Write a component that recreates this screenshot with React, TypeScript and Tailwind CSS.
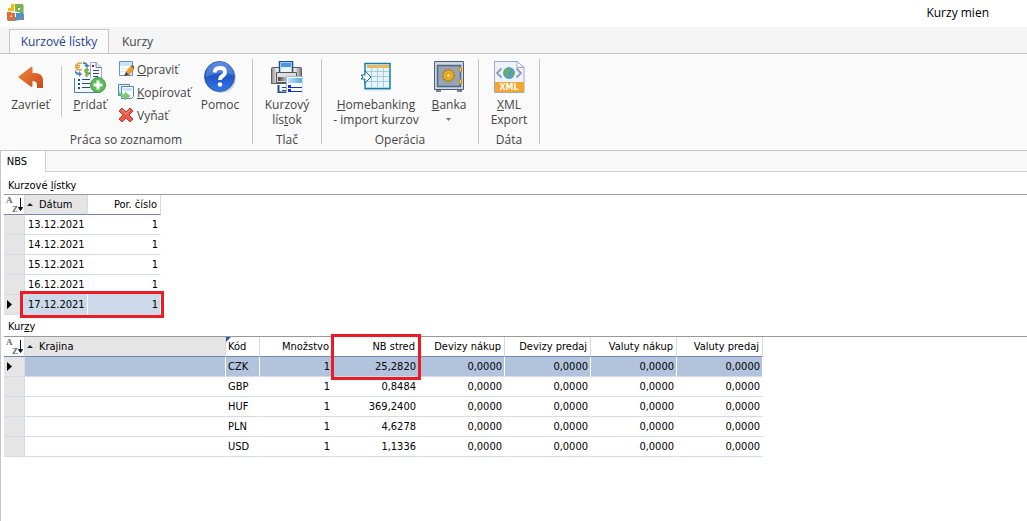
import React from "react";

interface Rate {
  code: string;
  amount: number;
  mid: string;
  rest: string[];
}

const lists = [
  "13.12.2021",
  "14.12.2021",
  "15.12.2021",
  "16.12.2021",
  "17.12.2021",
];

const zeros = ["0,0000", "0,0000", "0,0000", "0,0000"];

const rates: Rate[] = [
  { code: "CZK", amount: 1, mid: "25,2820", rest: zeros },
  { code: "GBP", amount: 1, mid: "0,8484", rest: zeros },
  { code: "HUF", amount: 1, mid: "369,2400", rest: zeros },
  { code: "PLN", amount: 1, mid: "4,6278", rest: zeros },
  { code: "USD", amount: 1, mid: "1,1336", rest: zeros },
];

const rateColumns = ["Devizy nákup", "Devizy predaj", "Valuty nákup", "Valuty predaj"];

const Logo = () => (
  <svg width="17" height="17" viewBox="0 0 17 17">
    <g fill="none" stroke="#85898c" strokeWidth="3">
      <path d="M9.500 7.500V2.500H15V11H10M2 17V10H7V15.500H1M10 16.500V14.500H15.500V10" />
    </g>
    <g fill="none" strokeWidth="3">
      <path d="M1 5.500H5.500V0M4 1.500H7.500" stroke="#f8bd0a" />
      <path d="M9.500 7V1.500H14.500V7.500H10" stroke="#7ab648" />
      <path d="M7 9.500H1.500V14.500H6.500V11" stroke="#e66a2e" />
      <path d="M9 10H14.500V13H9.500V16" stroke="#4595cc" />
    </g>
    <path d="M7 4h1v4H4v1h4v4h1V9h4V8H8z" fill="#fff" />
  </svg>
);

const BackIcon = () => (
  <svg width="32" height="32" viewBox="0 0 32 32">
    <defs>
      <linearGradient id="back" x1="0" y1="0" x2="1" y2="1">
        <stop offset="0" stopColor="#f4863b" />
        <stop offset="1" stopColor="#c54a1a" />
      </linearGradient>
    </defs>
    <path
      d="M3 16L16 6q2-1 1.500 1.500V12H20q8 0 8 8v7h-6v-3q0-4-4.500-4v4.500q0 2-2 1z"
      fill="url(#back)"
    />
  </svg>
);

const AddIcon = () => (
  <svg width="32" height="32" viewBox="0 0 32 32">
    <path d="M16.500 1.500H22l5.500 5v12h-11z" fill="#fbfcff" stroke="#9fabd0" />
    <path d="M22 1.500v5h5.500" fill="#dfe5f3" stroke="#6f80b4" />
    <path d="M1 17h26v14H1z" fill="#f3f8fd" />
    <path d="M.5 17v14.500H26" fill="none" stroke="#4b80bd" />
    <g fill="#2b4a80">
      <path d="M4 18h2v2H4zM8 18h8v1H8zM4 22h2v2H4zM8 22h8v1H8zM4 26h2v2H4zM8 26h8v1H8z" />
      <path d="M19 9h6v1h-6zM19 12h6v1h-6zM19 15h5v1h-5z" />
    </g>
    <path d="M18 4h2v2h-2z" fill="#d0021b" />
    <path
      d="M8 2.500Q3 .500 2.500 5.500T8 8.500M1 4.500h5M1 6.500h5"
      fill="none"
      stroke="#e0a33c"
      strokeWidth="1.600"
    />
    <path
      d="M15 9q-4-1.500-4 1t4 2-4 2.500M13 7v9"
      fill="none"
      stroke="#70a84a"
      strokeWidth="1.600"
    />
    <path d="M9 1q4 0 5 3h2l-3 3-3-3h2q-1-1-3-1zM1 9v3q1 2 4 2v2l3-3-3-3v2q-2 0-4-3z" fill="#4b86b8" />
    <circle cx="24" cy="24" r="7.500" fill="#5dba58" stroke="#3f9c3c" />
    <path d="M24 19.500v9M19.500 24h9" stroke="#fff" strokeWidth="3" />
  </svg>
);

const EditIcon = () => (
  <svg width="16" height="16" viewBox="0 0 16 16">
    <path d="M1.500.500h13v14h-13z" fill="#fff" stroke="#5f95cf" />
    <path d="M2 1h12v4H2z" fill="#c9e3f7" />
    <path d="M3 7h7v1H3zM3 10h5v1H3z" fill="#dbe5ee" />
    <path d="M8 11l5-6 3 3-5 6z" fill="#eaa42e" stroke="#c08428" strokeWidth=".7" />
    <path d="M13 5l1-1 2 1v3z" fill="#9a4f32" />
    <path d="M8 11l3 3-5 1z" fill="#4d4033" />
  </svg>
);

const CopyIcon = () => (
  <svg width="16" height="16" viewBox="0 0 16 16">
    <path d="M.5.500h11v11H.5z" fill="#e4f3fd" stroke="#4c87c5" />
    <path d="M3.500 2.500h12v10l-2 2h-10z" fill="#fff" stroke="#4c87c5" />
    <path d="M5 4h9v3H5z" fill="#c9e3f7" />
    <path d="M1 8q2 3 6 2.500V8l5 4-5 4v-2.500Q1 13 1 8z" fill="#7acb74" stroke="#58b155" strokeWidth=".5" />
  </svg>
);

const DeleteIcon = () => (
  <svg width="16" height="16" viewBox="0 0 16 16">
    <path
      d="M4 1l4 4 4-4 3 3-4 4 4 4-3 3-4-4-4 4-3-3 4-4-4-4z"
      fill="#ee5b4c"
      stroke="#c23a30"
      strokeLinejoin="round"
    />
    <path d="M4 3l4 4 4-4" fill="none" stroke="#f79a8d" />
  </svg>
);

const HelpIcon = () => (
  <svg width="32" height="32" viewBox="0 0 32 32">
    <defs>
      <linearGradient id="help" x1="0" y1="0" x2="0" y2="1">
        <stop offset="0" stopColor="#4b7fdd" />
        <stop offset=".5" stopColor="#2256c4" />
        <stop offset="1" stopColor="#3577e8" />
      </linearGradient>
    </defs>
    <circle cx="17" cy="17" r="15" fill="#c9ccd2" />
    <circle cx="15.500" cy="15.500" r="15" fill="url(#help)" stroke="#1d4ba8" strokeWidth=".8" />
    <path d="M2 14a14 13 0 0 1 28 0q-14-5-28 2z" fill="#7ea6ec" opacity=".4" />
    <path
      d="M10.500 11.500q.500-4.500 5.500-4.500t5 4q0 2.500-2.500 4t-2.500 4"
      fill="none"
      stroke="#fff"
      strokeWidth="3.800"
    />
    <circle cx="16" cy="23.500" r="2.300" fill="#fff" />
  </svg>
);

const PrintIcon = () => (
  <svg width="32" height="32" viewBox="0 0 32 32">
    <defs>
      <linearGradient id="print" x1="0" y1="0" x2="1" y2="0">
        <stop offset="0" stopColor="#8a8a8a" />
        <stop offset=".2" stopColor="#f4f4f4" />
        <stop offset=".8" stopColor="#e2e2e2" />
        <stop offset="1" stopColor="#777" />
      </linearGradient>
      <linearGradient id="tray" x1="0" y1="0" x2="1" y2="0">
        <stop offset="0" stopColor="#444" />
        <stop offset="1" stopColor="#e8e8e8" />
      </linearGradient>
      <linearGradient id="sheet" x1="0" y1="0" x2="1" y2="0">
        <stop offset="0" stopColor="#bfe1f5" />
        <stop offset="1" stopColor="#5aa9dd" />
      </linearGradient>
    </defs>
    <path d="M.5 7.500q0-1 1-1h28q1 0 1 1v15H.5z" fill="url(#print)" stroke="#5c5c5c" />
    <path d="M8.500.500h13v12h-13z" fill="#e6f4fd" stroke="#17509c" strokeWidth="1.500" />
    <path d="M10 2h10v4H10z" fill="#4a97e0" />
    <path d="M5.500 11.500h20v10h-20z" fill="#dedede" stroke="#555" />
    <path d="M7 16h11v4H7z" fill="url(#tray)" />
    <path d="M7.500 24v7.500h8" fill="#fff" stroke="#17509c" strokeWidth="2" />
    <path d="M11 26h4v1h-4zM11 29h4v1h-4z" fill="#17509c" />
    <path d="M15.500 15.500H32v17H15.500z" fill="#fff" stroke="#8fc0ea" />
    <path d="M17 17h14v5H17z" fill="url(#sheet)" />
    <path d="M17 24h3v3h-3zM17 28h3v3h-3zM20 26h11v1H20zM20 30h11v1H20z" fill="#1330d4" />
  </svg>
);

const ImportIcon = () => (
  <svg width="32" height="32" viewBox="0 0 32 32">
    <path d="M5 28h26v1.500H5z" fill="#d5d9dc" />
    <path d="M5 2.500h25v25H5z" fill="#e8f5fc" stroke="#0d7fb8" strokeWidth="1.500" />
    <path d="M7 4h22v3H7z" fill="#f6b73c" />
    <path d="M11.500 4v22M17.500 4v22M23.500 4v22M6 10.500h23M6 15.500h23M6 20.500h23" stroke="#a5c9e4" />
    <path d="M1 14h4v-4l6 6-6 6v-4H1l2-2z" fill="#fff" stroke="#0d6fa8" />
  </svg>
);

const SafeIcon = () => (
  <svg width="32" height="32" viewBox="0 0 32 32">
    <path d="M3 28h5v3H3zM24 28h5v3h-5z" fill="#77859a" />
    <path d="M1.500.500h29v28h-29z" fill="#ccd7e3" stroke="#4c5e75" />
    <path d="M4.500 4.500h23v21h-23z" fill="#93a5b9" stroke="#56667b" strokeWidth="1.500" />
    <circle cx="15.500" cy="14.500" r="5.500" fill="#eab530" stroke="#c48a1c" strokeWidth="1.500" />
    <circle cx="15.500" cy="14.500" r="6.500" fill="none" stroke="#b77a12" strokeDasharray="1 2" />
    <circle cx="15.500" cy="14.500" r="2.500" fill="#f9d864" stroke="#c48a1c" />
    <path d="M26.500 6.500h2v4h-2zM26.500 18.500h2v4h-2z" fill="#ffcf3a" stroke="#d08a10" />
  </svg>
);

const XmlIcon = () => (
  <svg width="32" height="32" viewBox="0 0 32 32">
    <path d="M1.500.500H24l7 6v25H1.500z" fill="#eef2fa" stroke="#9ca8c4" />
    <path d="M24 .5v6h7z" fill="#fff" stroke="#9ca8c4" />
    <path d="M2 21h29v10H2z" fill="#f7a52b" />
    <circle cx="16" cy="12" r="5.500" fill="#4c9bd8" stroke="#3a7ab8" strokeWidth=".6" />
    <path d="M12 9l4-2 2 3-3 1 1 3-2 2q-3-2-2-7zM18 13l3-3q1 4-3 6z" fill="#6bb545" />
    <path
      d="M8.500 7.500L4 12l4.500 4.500M23.500 7.500L28 12l-4.500 4.500"
      fill="none"
      stroke="#8f9bb8"
      strokeWidth="1.800"
    />
    <text x="16" y="29" textAnchor="middle" fontSize="8" fontWeight="700" fill="#fff" fontFamily="DejaVu Sans">
      XML
    </text>
  </svg>
);

const SortIcon = () => (
  <svg width="17" height="17" viewBox="0 0 17 17">
    <text x="0" y="7" fontSize="9" fontWeight="700" fill="#666" fontFamily="Liberation Serif">A</text>
    <text x="6" y="16" fontSize="9" fontWeight="700" fill="#666" fontFamily="Liberation Serif">Z</text>
    <path d="M14.500 2v11M12.500 11.500l2 3 2-3z" fill="#111" stroke="#111" />
  </svg>
);

const SortMark = () => (
  <svg className="shrink-0" width="6" height="3" viewBox="0 0 6 3">
    <path d="M0 3l3-3 3 3z" fill="#222" />
  </svg>
);

const RowMark = () => (
  <svg className="ml-[3px]" width="5" height="9" viewBox="0 0 5 9">
    <path d="M0 0l5 4.500L0 9z" fill="#000" />
  </svg>
);

interface BigButtonProps {
  icon: React.ReactNode;
  className?: string;
  children: React.ReactNode;
}

const BigButton: React.FC<BigButtonProps> = ({ icon, className, children }) => (
  <button type="button" className={`flex flex-col items-center whitespace-nowrap ${className ?? ""}`}>
    {icon}
    <span className="mt-1 text-center">{children}</span>
  </button>
);

const SmallButton: React.FC<BigButtonProps> = ({ icon, children }) => (
  <button type="button" className="flex items-center gap-[3px] h-4 whitespace-nowrap">
    {icon}
    <span>{children}</span>
  </button>
);

const Group: React.FC<{ label: string; className: string; children: React.ReactNode }> = ({
  label,
  className,
  children,
}) => (
  <>
    <div className={`flex flex-col shrink-0 h-[88px] pt-[2px] ${className}`}>
      <div className="flex flex-1 justify-center">{children}</div>
      <div className="text-center">{label}</div>
    </div>
    <div className="w-px h-[85px] shrink-0 bg-[#c6c6c6]" />
  </>
);

const Ribbon = () => (
  <div className="bg-[#f5f5f5] text-[#444] text-[12px] leading-[15px] font-['Open_Sans','Noto_Sans',sans-serif]">
    <div className="flex pt-[2px] border-b border-[#c6c6c6]">
      <button
        type="button"
        className="ml-[9px] -mb-px w-[100px] h-6 border border-b-0 border-[#c6c6c6] bg-[#fafafa] text-[#1e3f94]"
      >
        Kurzové lístky
      </button>
      <button type="button" className="w-[57px] h-6">
        Kurzy
      </button>
    </div>
    <div className="flex items-start bg-[#fafafa] pt-[5px] pb-[3px] border-b border-[#c6c6c6]">
      <Group label="Práca so zoznamom" className="w-[252px]">
        <BigButton icon={<BackIcon />} className="w-[61px]">
          Zavrieť
        </BigButton>
        <div className="w-px h-[51px] mt-[5px] bg-[#c6c6c6]" />
        <BigButton icon={<AddIcon />} className="w-[56px]">
          <u>P</u>ridať
        </BigButton>
        <div className="flex flex-col gap-[7px] w-[77px]">
          <SmallButton icon={<EditIcon />}>
            <u>O</u>praviť
          </SmallButton>
          <SmallButton icon={<CopyIcon />}>
            <u>K</u>opírovať
          </SmallButton>
          <SmallButton icon={<DeleteIcon />}>Vyňať</SmallButton>
        </div>
        <BigButton icon={<HelpIcon />} className="w-[50px] mr-[7px]">
          Pomoc
        </BigButton>
      </Group>
      <Group label="Tlač" className="w-[68px]">
        <BigButton icon={<PrintIcon />}>
          Kurzový
          <br />
          lís<u>t</u>ok
        </BigButton>
      </Group>
      <Group label="Operácia" className="w-[156px]">
        <BigButton icon={<ImportIcon />} className="w-[108px]">
          <u>H</u>omebanking
          <br />- import kurzov
        </BigButton>
        <BigButton icon={<SafeIcon />} className="w-[38px] mr-[10px]">
          <u>B</u>anka
          <svg className="mx-auto mt-[6px]" width="5" height="3" viewBox="0 0 5 3">
            <path d="M0 0h5L2.500 3z" fill="#777" />
          </svg>
        </BigButton>
      </Group>
      <Group label="Dáta" className="w-[60px]">
        <BigButton icon={<XmlIcon />}>
          <u>X</u>ML
          <br />
          Export
        </BigButton>
      </Group>
    </div>
  </div>
);

const headCell = "h-5 p-0 font-normal border-b border-b-[#7286b5] border-r border-r-[#d6d9e8]";
const cell = "h-5 p-0 border-b border-b-[#d6d9e8] border-r";

const ListTable = () => (
  <div className="relative w-fit">
    <table className="w-[157px] table-fixed border-separate border-spacing-0">
      <colgroup>
        <col className="w-[21px]" />
        <col className="w-[63px]" />
        <col className="w-[73px]" />
      </colgroup>
      <thead>
        <tr>
          <th className={headCell}>
            <button type="button" aria-label="Zoradiť" className="block ml-[2px]">
              <SortIcon />
            </button>
          </th>
          <th className={`${headCell} bg-[#e5e5e5]`}>
            <div className="flex items-center gap-[6px] pl-[2px]">
              <SortMark />
              Dátum
            </div>
          </th>
          <th className={`${headCell} text-right pr-[3px]`}>Por. číslo</th>
        </tr>
      </thead>
      <tbody>
        {lists.map((date, i) => {
          const selected = i === lists.length - 1;
          const tone = selected ? "bg-[#cbd9e8] border-r-white" : "border-r-white";
          return (
            <tr key={date}>
              <td className={`${cell} bg-[#e5e5e5] border-r-[#d6d9e8]`}>{selected && <RowMark />}</td>
              <td className={`${cell} ${tone} pl-[3px]`}>{date}</td>
              <td className={`${cell} ${tone} text-right pr-[2px]`}>1</td>
            </tr>
          );
        })}
      </tbody>
    </table>
    <div className="absolute left-4 -right-[3px] -bottom-[3px] h-[27px] border-3 border-[#ed1c24]" />
  </div>
);

const RateTable = () => (
  <div className="relative w-fit">
    <table className="w-[759px] table-fixed border-separate border-spacing-0">
      <colgroup>
        <col className="w-[21px]" />
        <col className="w-[201px]" />
        <col className="w-[34px]" />
        <col className="w-[73px]" />
        <col className="w-[86px]" />
        <col className="w-[86px]" />
        <col className="w-[86px]" />
        <col className="w-[86px]" />
        <col className="w-[86px]" />
      </colgroup>
      <thead>
        <tr>
          <th className={headCell}>
            <button type="button" aria-label="Zoradiť" className="block ml-[2px]">
              <SortIcon />
            </button>
          </th>
          <th className={`${headCell} bg-[#e5e5e5]`}>
            <div className="flex items-center gap-[6px] pl-[2px]">
              <SortMark />
              Krajina
            </div>
          </th>
          <th className={`${headCell} relative text-left pl-[2px]`}>
            <svg className="absolute left-0 top-0" width="5" height="5" viewBox="0 0 5 5">
              <path d="M0 0h5L0 5z" fill="#3457a8" />
            </svg>
            Kód
          </th>
          <th className={`${headCell} text-right pr-[3px]`}>Množstvo</th>
          <th className={`${headCell} text-right pr-[3px]`}>NB stred</th>
          {rateColumns.map((name) => (
            <th key={name} className={`${headCell} text-right pr-[3px]`}>
              {name}
            </th>
          ))}
        </tr>
      </thead>
      <tbody>
        {rates.map((rate, i) => {
          const tone = i === 0 ? "bg-[#b2c4dd] border-r-white" : "border-r-white";
          return (
            <tr key={rate.code}>
              <td className={`${cell} bg-[#e5e5e5] border-r-[#d6d9e8]`}>{i === 0 && <RowMark />}</td>
              <td className={`${cell} ${tone}`} />
              <td className={`${cell} ${tone} pl-[2px]`}>{rate.code}</td>
              <td className={`${cell} ${tone} text-right pr-[2px]`}>{rate.amount}</td>
              <td className={`${cell} ${tone} text-right pr-[2px]`}>{rate.mid}</td>
              {rate.rest.map((value, j) => (
                <td key={j} className={`${cell} ${tone} text-right pr-[2px]`}>
                  {value}
                </td>
              ))}
            </tr>
          );
        })}
      </tbody>
    </table>
    <div className="absolute left-[327px] -top-[3px] w-[90px] h-[46px] border-3 border-[#ed1c24]" />
  </div>
);

const App: React.FC = () => {
  return (
    <div className="flex flex-col min-h-screen bg-white text-black">
      <header className="flex items-center justify-between h-[27px] pl-[7px] pr-[38px] pb-[2px]">
        <Logo />
        <h1 className="text-[12px] leading-[15px] font-['Open_Sans','Noto_Sans',sans-serif]">Kurzy mien</h1>
      </header>
      <Ribbon />
      <main className="flex-1 border-l border-[#c6c6c6] text-[11px] leading-[14px] whitespace-nowrap font-['DejaVu_Sans_Condensed','DejaVu_Sans',sans-serif]">
        <div className="flex h-[21px]">
          <button type="button" className="w-[45px] pr-3 bg-white border-r border-[#d0d0d0]">
            NBS
          </button>
          <div className="flex-1 bg-[#f8f8f8] border-b border-[#d0d0d0]" />
        </div>
        <section className="pl-[3px]">
          <h2 className="h-[22px] pt-[7px] pl-1">
            Kurzové <u>l</u>ístky
          </h2>
          <div className="border-t border-[#999]">
            <ListTable />
          </div>
        </section>
        <section className="pl-[3px]">
          <h2 className="h-[21px] pt-[5px] pl-1">
            Kur<u>z</u>y
          </h2>
          <div className="border-t border-[#999]">
            <RateTable />
          </div>
        </section>
      </main>
    </div>
  );
};

export default App;
